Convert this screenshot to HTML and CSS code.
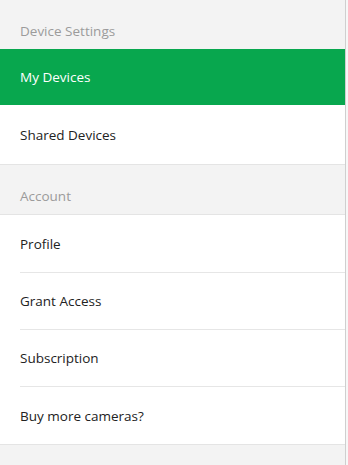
FILE: index.html
```html
<!DOCTYPE html>
<html lang="en">
<head>
<meta charset="utf-8">
<title>Settings</title>
<link rel="stylesheet" href="styles.css">
</head>
<body>
<nav class="sidebar">
  <div class="section-title">Device Settings</div>
  <ul class="menu">
    <li class="item active">My Devices</li>
    <li class="item tall">Shared Devices</li>
  </ul>
  <div class="section-title">Account</div>
  <ul class="menu inset">
    <li class="item">Profile</li>
    <li class="item">Grant Access</li>
    <li class="item">Subscription</li>
    <li class="item last">Buy more cameras?</li>
  </ul>
</nav>
</body>
</html>
```
FILE: styles.css
```css
html, body {
  margin: 0;
  padding: 0;
  background: #f7f7f7;
}
body {
  font-family: "Open Sans", "Liberation Sans", sans-serif;
  font-size: 13.5px;
  width: 348px;
  height: 465px;
  overflow: hidden;
}
.sidebar {
  width: 345px;
  height: 465px;
  background: #f3f3f3;
  border-right: 1px solid #cfcfcf;
}
.section-title {
  height: 49px;
  box-sizing: border-box;
  padding: 21px 0 0 20px;
  line-height: 20px;
  color: #9b9b9b;
}
.menu {
  list-style: none;
  margin: 0;
  padding: 0;
  background: #fff;
  border-top: 1px solid #e4e4e4;
  border-bottom: 1px solid #e4e4e4;
}
.menu:first-of-type {
  border-top: none;
}
.item {
  height: 56px;
  display: flex;
  align-items: center;
  padding-left: 20px;
  color: #222;
  box-sizing: border-box;
}
.item.active {
  background: #08a74e;
  color: #fff;
}
.item.tall {
  height: 59px;
}
.inset .item {
  margin-left: 20px;
  padding-left: 0;
  height: 57px;
  border-bottom: 1px solid #e6e6e6;
}
.inset .item:first-child {
  height: 58px;
}
.inset .item.last {
  border-bottom: none;
}
```
